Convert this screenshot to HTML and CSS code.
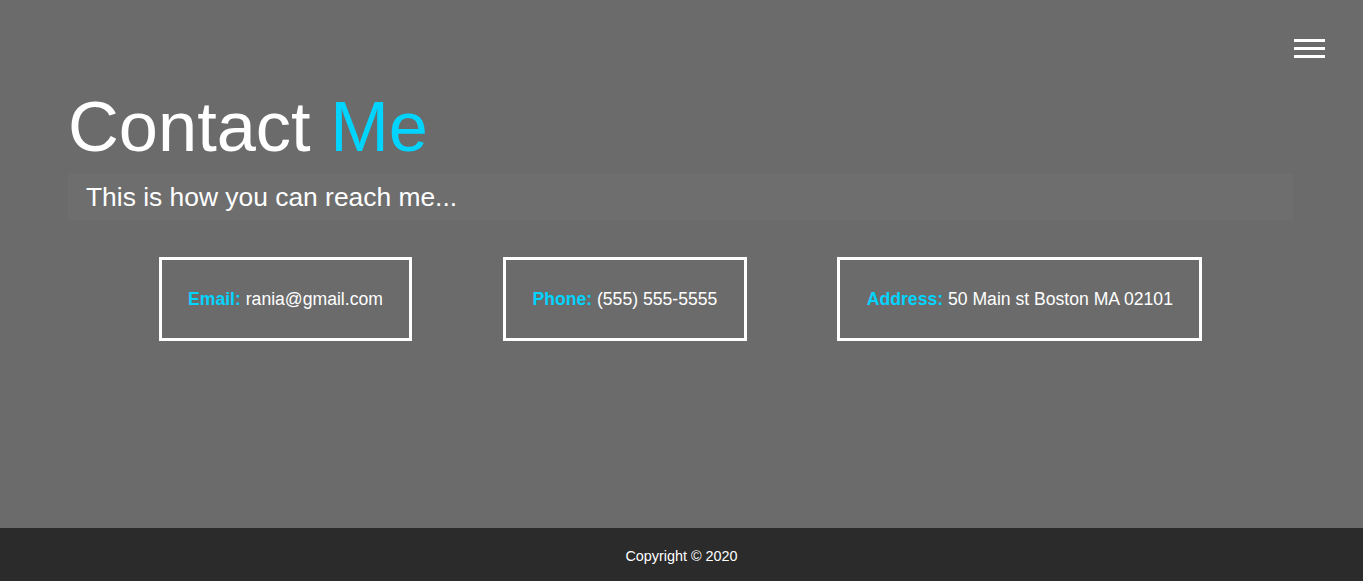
FILE: index.html
```html
<!DOCTYPE html>
<html lang="en">
<head>
<meta charset="utf-8">
<title>Contact Me</title>
<link rel="stylesheet" href="styles.css">
</head>
<body>
<div class="page">
  <header class="topbar">
    <div class="menu-btn" aria-label="menu">
      <span class="bar"></span>
      <span class="bar"></span>
      <span class="bar"></span>
    </div>
  </header>
  <main class="content">
    <h1 class="title">Contact <span class="accent">Me</span></h1>
    <h2 class="subtitle">This is how you can reach me...</h2>
    <div class="cards">
      <div class="card"><span class="label">Email:</span> rania@gmail.com</div>
      <div class="card"><span class="label">Phone:</span> (555) 555-5555</div>
      <div class="card"><span class="label">Address:</span> 50 Main st Boston MA 02101</div>
    </div>
  </main>
  <footer class="footer">Copyright &copy; 2020</footer>
</div>
</body>
</html>
```
FILE: styles.css
```css
* { box-sizing: border-box; }
html, body {
  margin: 0;
  padding: 0;
  height: 100%;
}
body {
  background: #6b6b6b;
  color: #fff;
  font-family: "Liberation Sans", Arial, sans-serif;
}
.page {
  min-height: 100%;
  display: flex;
  flex-direction: column;
}
.topbar {
  display: flex;
  justify-content: flex-end;
  padding: 39px 38px 0 0;
}
.menu-btn {
  display: flex;
  flex-direction: column;
  gap: 5px;
  width: 31px;
}
.bar {
  display: block;
  height: 3px;
  background: #fff;
}
.content {
  flex: 1;
  padding: 28px 70px 0 68px;
}
.title {
  margin: 0;
  font-size: 70.4px;
  font-weight: 400;
  line-height: normal;
}
.accent { color: #00d4ff; }
.subtitle {
  margin: 7px 0 0;
  padding: 8px 18px 7px;
  font-size: 26.4px;
  font-weight: 400;
  line-height: normal;
  background: #6e6e6e;
}
.cards {
  display: flex;
  justify-content: space-evenly;
  margin-top: 36.5px;
}
.card {
  border: 3px solid #fff;
  padding: 28px 26.5px;
  font-size: 17.6px;
  line-height: 22px;
  height: 84px;
}
.label {
  color: #00d4ff;
  font-weight: 700;
}
.footer {
  background: #2b2b2b;
  height: 53px;
  display: flex;
  align-items: center;
  justify-content: center;
  font-size: 14.4px;
  color: #fff;
  padding-top: 2px;
}
```
